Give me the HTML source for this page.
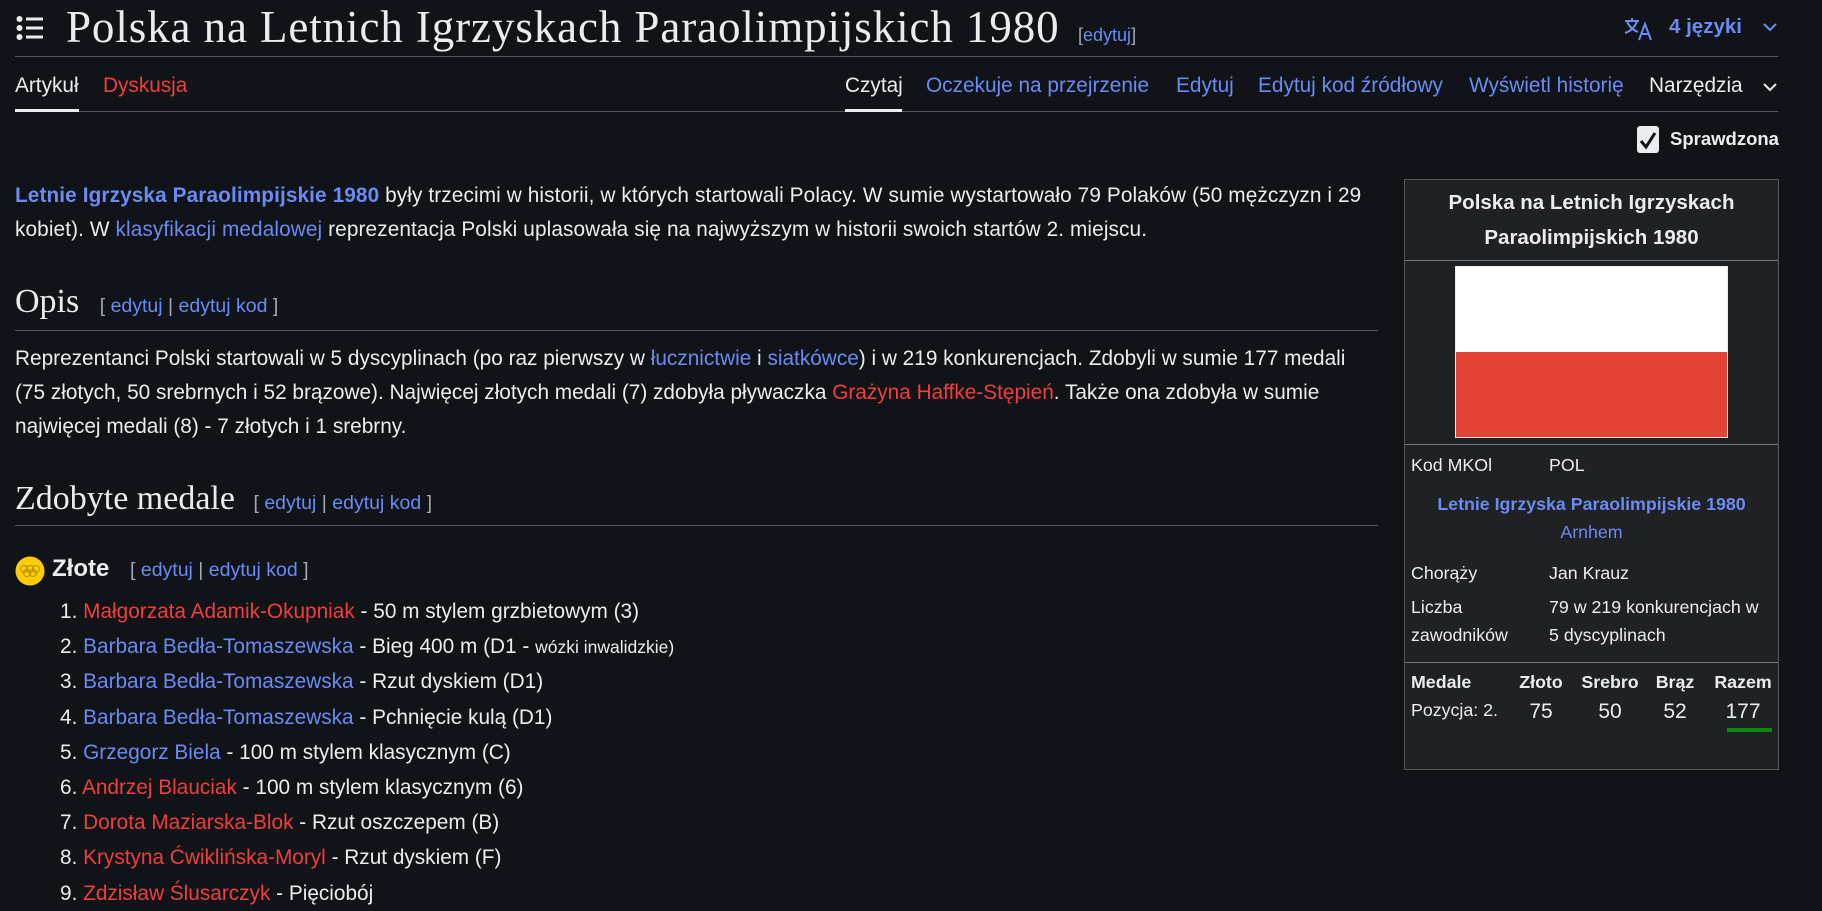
<!DOCTYPE html>
<html><head><meta charset="utf-8">
<style>
*{margin:0;padding:0;box-sizing:border-box}
body{width:1822px;height:882px;overflow:hidden;background:#101418;color:#eaecf0;font-family:"Liberation Sans",sans-serif;font-size:20.8px;position:relative}
.a{position:absolute;white-space:nowrap}
.b{color:#6b8af2}
.r{color:#f23d3d}
.serif{font-family:"Liberation Serif",serif}
.hr{position:absolute;height:1px;background:#54595d}
.ed{font-size:19.5px;color:#a2a9b1}
.ed .b{color:#6b8af2}
p.t{position:absolute;left:15px;width:1362px;line-height:33.8px}
.ib{position:absolute;left:1404px;top:179px;width:375px;height:591px;background:#202122;border:1px solid #54595d;font-size:17.8px}
.ib .a{position:absolute}
ol{position:absolute;left:60px;top:594px;list-style:none}
ol li{height:35.2px;line-height:35px;white-space:nowrap}
</style></head><body>
<svg class="a" style="left:15px;top:14px" width="30" height="28" viewBox="0 0 30 28">
<circle cx="4.5" cy="5" r="3" fill="#eaecf0"/><circle cx="4.5" cy="14" r="3" fill="#eaecf0"/><circle cx="4.5" cy="23" r="3" fill="#eaecf0"/>
<rect x="11" y="3.5" width="17" height="3" fill="#eaecf0"/><rect x="11" y="12.5" width="17" height="3" fill="#eaecf0"/><rect x="11" y="21.5" width="17" height="3" fill="#eaecf0"/></svg>
<div class="a serif" style="left:66px;top:1px;font-size:45px;line-height:52px;letter-spacing:0.9px">Polska na Letnich Igrzyskach Paraolimpijskich 1980</div>
<div class="a" style="left:1078px;top:25px;font-size:18px;color:#a2a9b1">[<span class="b">edytuj</span>]</div>
<svg class="a" style="left:1624px;top:17px" width="30" height="24" viewBox="0 0 30 24" fill="none" stroke="#6b8af2" stroke-width="2"><path d="M1 4h14M8 1v3M3 4c2 6 6 9 11 11M13 4c-2 6-6 10-12 12"/><path d="M15 23l6-16 6 16M17.5 17h7"/></svg>
<div class="a b" style="left:1669px;top:15px;font-weight:bold;font-size:20.5px">4 języki</div>
<svg class="a" style="left:1762px;top:22px" width="16" height="10" viewBox="0 0 16 10"><path d="M2 2l6 6 6-6" stroke="#6b8af2" stroke-width="2" fill="none"/></svg>
<div class="hr" style="left:15px;top:56px;width:1763px"></div>
<div class="a" style="left:15px;top:74px">Artykuł</div>
<div class="a r" style="left:103px;top:74px">Dyskusja</div>
<div class="a" style="left:845px;top:74px">Czytaj</div>
<div class="a b" style="left:926px;top:74px">Oczekuje na przejrzenie</div>
<div class="a b" style="left:1176px;top:74px">Edytuj</div>
<div class="a b" style="left:1258px;top:74px">Edytuj kod źródłowy</div>
<div class="a b" style="left:1469px;top:74px">Wyświetl historię</div>
<div class="a" style="left:1649px;top:74px">Narzędzia</div>
<svg class="a" style="left:1762px;top:82px" width="16" height="10" viewBox="0 0 16 10"><path d="M2 2l6 6 6-6" stroke="#eaecf0" stroke-width="2" fill="none"/></svg>
<div class="hr" style="left:15px;top:111px;width:1763px"></div>
<div class="a" style="left:15px;top:109px;width:64px;height:3px;background:#eaecf0"></div>
<div class="a" style="left:845px;top:109px;width:57px;height:3px;background:#eaecf0"></div>
<svg class="a" style="left:1636px;top:125px" width="24" height="29" viewBox="0 0 24 29"><rect x="1" y="1" width="22" height="27" rx="3" fill="#eaecf0"/><path d="M5 16l5 6 9-14" stroke="#101418" stroke-width="3" fill="none"/></svg>
<div class="a" style="left:1670px;top:128px;font-weight:bold;font-size:18.5px">Sprawdzona</div>

<p class="t" style="top:179px;letter-spacing:0.1px"><b class="b">Letnie Igrzyska Paraolimpijskie 1980</b> były trzecimi w historii, w których startowali Polacy. W sumie wystartowało 79 Polaków (50 mężczyzn i 29 kobiet). W <span class="b">klasyfikacji medalowej</span> reprezentacja Polski uplasowała się na najwyższym w historii swoich startów 2. miejscu.</p>

<div class="a serif" style="left:15px;top:283px;font-size:34px">Opis <span class="ed" style="font-family:'Liberation Sans',sans-serif;margin-left:12px">[ <span class="b">edytuj</span> | <span class="b">edytuj kod</span> ]</span></div>
<div class="hr" style="left:15px;top:330px;width:1363px"></div>
<p class="t" style="top:342px">Reprezentanci Polski startowali w 5 dyscyplinach (po raz pierwszy w <span class="b">łucznictwie</span> i <span class="b">siatkówce</span>) i w 219 konkurencjach. Zdobyli w sumie 177 medali (75 złotych, 50 srebrnych i 52 brązowe). Najwięcej złotych medali (7) zdobyła pływaczka <span class="r">Grażyna Haffke-Stępień</span>. Także ona zdobyła w sumie najwięcej medali (8) - 7 złotych i 1 srebrny.</p>

<div class="a serif" style="left:15px;top:480px;font-size:34px">Zdobyte medale <span class="ed" style="font-family:'Liberation Sans',sans-serif;margin-left:10px">[ <span class="b">edytuj</span> | <span class="b">edytuj kod</span> ]</span></div>
<div class="hr" style="left:15px;top:525px;width:1363px"></div>

<svg class="a" style="left:15px;top:556px" width="30" height="30" viewBox="0 0 30 30"><circle cx="15" cy="15" r="14.5" fill="#fc0"/><g fill="none" stroke="#b58f00" stroke-width="1"><circle cx="9" cy="13" r="3.5"/><circle cx="15" cy="13" r="3.5"/><circle cx="21" cy="13" r="3.5"/><circle cx="12" cy="17" r="3.5"/><circle cx="18" cy="17" r="3.5"/></g></svg>
<div class="a" style="left:52px;top:555px;font-size:24px;font-weight:bold">Złote <span class="ed" style="font-weight:normal;margin-left:14px">[ <span class="b">edytuj</span> | <span class="b">edytuj kod</span> ]</span></div>

<ol>
<li>1. <span class="r">Małgorzata Adamik-Okupniak</span> - 50 m stylem grzbietowym (3)</li>
<li>2. <span class="b">Barbara Bedła-Tomaszewska</span> - Bieg 400 m (D1 - <span style="font-size:17.5px">wózki inwalidzkie)</span></li>
<li>3. <span class="b">Barbara Bedła-Tomaszewska</span> - Rzut dyskiem (D1)</li>
<li>4. <span class="b">Barbara Bedła-Tomaszewska</span> - Pchnięcie kulą (D1)</li>
<li>5. <span class="b">Grzegorz Biela</span> - 100 m stylem klasycznym (C)</li>
<li>6. <span class="r">Andrzej Blauciak</span> - 100 m stylem klasycznym (6)</li>
<li>7. <span class="r">Dorota Maziarska-Blok</span> - Rzut oszczepem (B)</li>
<li>8. <span class="r">Krystyna Ćwiklińska-Moryl</span> - Rzut dyskiem (F)</li>
<li>9. <span class="r">Zdzisław Ślusarczyk</span> - Pięciobój</li>
</ol>

<div class="ib">
<div class="a" style="left:0;top:5px;width:373px;text-align:center;font-weight:bold;font-size:20.5px;line-height:35px">Polska na Letnich Igrzyskach<br>Paraolimpijskich 1980</div>
<div class="hr" style="left:0;top:80px;width:373px;background:#72777d"></div>
<div class="a" style="left:50px;top:86px;width:273px;height:172px;border:1px solid #eaecf0;background:#fff"><div style="position:absolute;left:0;right:0;bottom:0;height:85px;background:#e34234"></div></div>
<div class="hr" style="left:0;top:264px;width:373px;background:#72777d"></div>
<div class="a" style="left:6px;top:275px">Kod MKOl</div>
<div class="a" style="left:144px;top:275px">POL</div>
<div class="a b" style="left:0;top:314px;width:373px;text-align:center;font-weight:bold">Letnie Igrzyska Paraolimpijskie 1980</div>
<div class="a b" style="left:0;top:342px;width:373px;text-align:center">Arnhem</div>
<div class="a" style="left:6px;top:383px">Chorąży</div>
<div class="a" style="left:144px;top:383px">Jan Krauz</div>
<div class="a" style="left:6px;top:413px;line-height:28px">Liczba<br>zawodników</div>
<div class="a" style="left:144px;top:413px;line-height:28px">79 w 219 konkurencjach w<br>5 dyscyplinach</div>
<div class="hr" style="left:0;top:482px;width:373px;background:#72777d"></div>
<div class="a" style="left:6px;top:492px;font-weight:bold">Medale</div>
<div class="a" style="left:110px;top:492px;width:52px;text-align:center;font-weight:bold">Złoto</div>
<div class="a" style="left:175px;top:492px;width:60px;text-align:center;font-weight:bold">Srebro</div>
<div class="a" style="left:248px;top:492px;width:44px;text-align:center;font-weight:bold">Brąz</div>
<div class="a" style="left:306px;top:492px;width:64px;text-align:center;font-weight:bold">Razem</div>
<div class="a" style="left:6px;top:520px">Pozycja: 2.</div>
<div class="a" style="left:116px;top:520px;width:40px;text-align:center;font-size:21px">75</div>
<div class="a" style="left:180px;top:520px;width:50px;text-align:center;font-size:21px">50</div>
<div class="a" style="left:250px;top:520px;width:40px;text-align:center;font-size:21px">52</div>
<div class="a" style="left:310px;top:520px;width:56px;text-align:center;font-size:21px">177</div>
<div class="a" style="left:322px;top:548px;width:45px;height:4px;background:#0a8a0a"></div>
</div>
</body></html>
